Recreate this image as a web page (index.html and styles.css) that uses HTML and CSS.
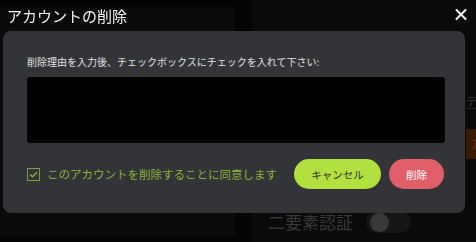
FILE: index.html
```html
<!DOCTYPE html>
<html lang="ja">
<head>
<meta charset="utf-8">
<title>アカウントの削除</title>
<link rel="stylesheet" href="styles.css">
</head>
<body>
<div class="page">
  <div class="col-left"><div class="panel-left"></div></div>
  <div class="col-right">
    <div class="row-theme"><span class="theme-text">テーマ</span></div>
    <div class="row-danger"><span class="danger-btn">アカ</span></div>
    <div class="row-2fa">
      <span class="twofa-label">二要素認証</span>
      <span class="toggle"><span class="knob"></span></span>
    </div>
  </div>
</div>

<div class="modal">
  <div class="modal-head">
    <h1 class="modal-title">アカウントの削除</h1>
    <svg class="close" width="12" height="11" viewBox="0 0 12 11" aria-label="閉じる">
      <path d="M1.5 1 L10.5 10 M10.5 1 L1.5 10" stroke="#f2f2f2" stroke-width="2" stroke-linecap="round" fill="none"/>
    </svg>
  </div>
  <div class="card">
    <p class="label">削除理由を入力後、チェックボックスにチェックを入れて下さい:</p>
    <div class="textarea"></div>
    <div class="footer">
      <label class="agree">
        <span class="checkbox">
          <svg width="9" height="7" viewBox="0 0 9 7"><path d="M1 3.5 L3.4 5.8 L8 1.2" stroke="#8db43c" stroke-width="1.3" fill="none"/></svg>
        </span>
        <span class="agree-text">このアカウントを削除することに同意します</span>
      </label>
      <div class="buttons">
        <span class="btn btn-cancel">キャンセル</span>
        <span class="btn btn-delete">削除</span>
      </div>
    </div>
  </div>
</div>
</body>
</html>
```

FILE: styles.css
```css
* { box-sizing: border-box; }
html, body { margin: 0; padding: 0; }
body {
  width: 476px;
  height: 242px;
  overflow: hidden;
  background: #040404;
  font-family: "Noto Sans CJK JP", "Noto Sans", sans-serif;
}

/* dimmed page underneath */
.page {
  display: grid;
  grid-template-columns: 235px 1fr;
  column-gap: 17px;
  height: 242px;
}
.col-left { padding-top: 7px; }
.panel-left { height: 229px; background: #0a0a0a; }
.col-right {
  background: #0a0a0a;
  display: flex;
  flex-direction: column;
  overflow: hidden;
}
.row-theme { padding: 87px 0 0 214px; }
.theme-text {
  display: inline-block;
  font-size: 11px;
  color: #363636;
  white-space: nowrap;
  border-bottom: 1px solid #262626;
  line-height: 14px;
}
.row-danger { padding: 18px 0 0 214px; }
.danger-btn {
  display: inline-block;
  background: #3a1806;
  color: #5a3a2a;
  font-size: 11px;
  line-height: 30px;
  padding: 0 4px;
  white-space: nowrap;
}
.row-2fa {
  margin-top: auto;
  padding: 0 0 9px 16px;
  display: flex;
  align-items: center;
  gap: 13px;
}
.twofa-label { font-size: 17px; color: #383838; line-height: 22px; }
.toggle {
  width: 45px; height: 22px; border-radius: 11px;
  background: #161616;
  display: flex; align-items: center; padding-left: 4px;
}
.knob { width: 19px; height: 19px; border-radius: 50%; background: #383838; }

/* modal overlay */
.modal {
  position: fixed;
  inset: 0;
  padding: 0 11px 0 3px;
  display: flex;
  flex-direction: column;
}
.modal-head {
  height: 31px;
  display: flex;
  align-items: center;
  justify-content: space-between;
  padding-left: 4px;
  margin-right: -2px;
}
.modal-title {
  margin: 0;
  font-size: 15px;
  font-weight: 400;
  color: #f2f2f2;
  line-height: 20px;
}
.close { margin-top: -3px; }

.card {
  background: #333437;
  border-radius: 8px;
  height: 182px;
  padding: 24px 20px 24px 24px;
  display: flex;
  flex-direction: column;
}
.label {
  margin: 0;
  font-size: 10px;
  line-height: 14px;
  color: #e0e0e0;
}
.textarea {
  margin-top: 8px;
  height: 66px;
  background: #000;
  border-radius: 3px;
}
.footer {
  margin-top: 16px;
  display: flex;
  align-items: center;
  justify-content: space-between;
  padding-right: 1px;
}
.agree { display: flex; align-items: center; gap: 7px; }
.checkbox {
  width: 13px; height: 13px;
  border: 1.5px solid #7f9f3c;
  display: flex; align-items: center; justify-content: center;
}
.agree-text {
  font-size: 11.5px;
  color: #8fb13a;
  line-height: 16px;
  white-space: nowrap;
}
.buttons { display: flex; gap: 8px; }
.btn {
  height: 30px;
  border-radius: 15px;
  display: flex;
  align-items: center;
  justify-content: center;
  font-size: 10.5px;
}
.btn-cancel { width: 87px; background: #b1e03f; color: #363630; }
.btn-delete { width: 55px; background: #e15f68; color: #fff; }
```
